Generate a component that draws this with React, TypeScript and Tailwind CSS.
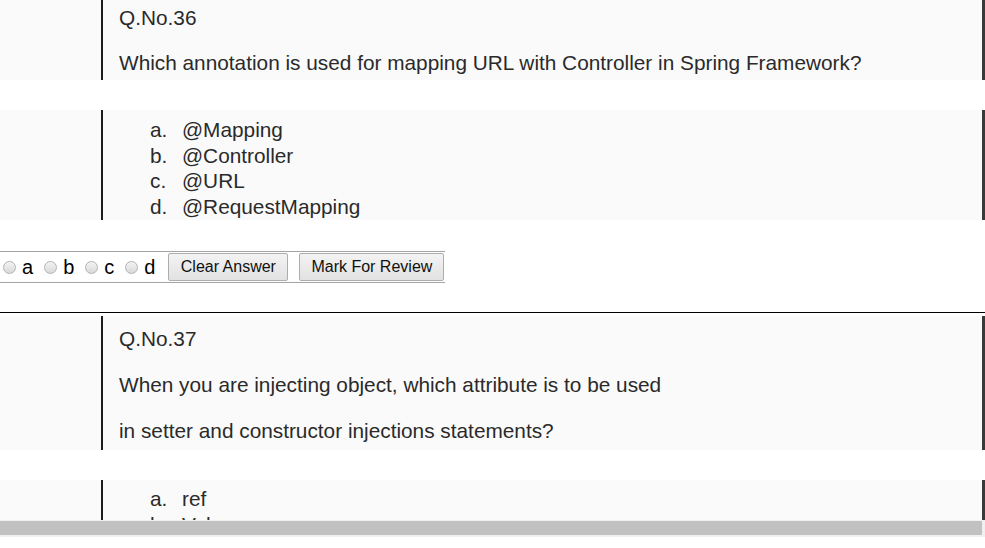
import React from 'react';

type Block = {
  kind: 'question' | 'options';
  lines: string[];
};

const font = { fontFamily: '"Liberation Sans", Arial, sans-serif' };

const QuestionBlock = ({ lines, className }: { lines: string[]; className: string }) => (
  <div className={`bg-[#fafafa] flex ${className}`}>
    <div className="ml-[101px] flex-1 border-l-2 border-l-[#1c1c1c] border-r-[3px] border-r-[#3a3a3a] pl-[16px] text-[20.8px] text-[#2a2a2a] flex flex-col">
      {lines.map((line, i) => (
        <div key={i} className="leading-[24px] whitespace-nowrap">
          {line}
        </div>
      ))}
    </div>
  </div>
);

const OptionsBlock = ({ options, className }: { options: string[]; className: string }) => (
  <div className={`bg-[#fafafa] flex ${className}`}>
    <div className="ml-[101px] flex-1 border-l-2 border-l-[#1c1c1c] border-r-[3px] border-r-[#3a3a3a] pl-[47px] text-[20.8px] text-[#2a2a2a]">
      {options.map((opt, i) => (
        <div key={i} className="flex leading-[25.67px] whitespace-nowrap">
          <span className="w-[32px]">{String.fromCharCode(97 + i)}.</span>
          <span>{opt}</span>
        </div>
      ))}
    </div>
  </div>
);

const Radio = ({ label }: { label: string }) => (
  <label className="flex items-center gap-[6px]">
    <span className="w-[13px] h-[13px] rounded-full border border-[#b3b3b3] bg-gradient-to-b from-[#f4f4f4] to-[#d9d9d9]" />
    <span className="text-[20px] leading-none text-black">{label}</span>
  </label>
);

const AnswerBar = () => (
  <div className="w-[445px] h-[32px] border-y border-[#a3a3a3] flex items-center pl-[3px]">
    <div className="flex items-center gap-[11px]">
      <Radio label="a" />
      <Radio label="b" />
      <Radio label="c" />
      <Radio label="d" />
    </div>
    <button className="ml-[13px] h-[28px] w-[120px] border border-[#adadad] rounded-[2px] bg-gradient-to-b from-[#f3f3f3] to-[#e2e2e2] text-[16px] text-[#111]">
      Clear Answer
    </button>
    <button className="ml-[11px] h-[28px] w-[145px] border border-[#adadad] rounded-[2px] bg-gradient-to-b from-[#f3f3f3] to-[#e2e2e2] text-[16px] text-[#111]">
      Mark For Review
    </button>
  </div>
);

export default function App() {
  return (
    <div className="w-[985px] h-[548px] bg-white overflow-hidden" style={font}>
      <div className="h-[520px] overflow-hidden flex flex-col">
        <QuestionBlock
          className="h-[80px] shrink-0 [&>div]:pt-[6px] [&>div]:gap-[21px]"
          lines={['Q.No.36', 'Which annotation is used for mapping URL with Controller in Spring Framework?']}
        />
        <OptionsBlock
          className="h-[110px] shrink-0 mt-[30px] [&>div]:pt-[7px]"
          options={['@Mapping', '@Controller', '@URL', '@RequestMapping']}
        />
        <div className="mt-[31px] shrink-0">
          <AnswerBar />
        </div>
        <div className="mt-[29px] h-px bg-black shrink-0" />
        <QuestionBlock
          className="h-[134px] shrink-0 mt-[3px] [&>div]:pt-[11px] [&>div]:gap-[22px]"
          lines={[
            'Q.No.37',
            'When you are injecting object, which attribute is to be used',
            'in setter and constructor injections statements?',
          ]}
        />
        <OptionsBlock
          className="h-[120px] shrink-0 mt-[30px] [&>div]:pt-[6px]"
          options={['ref', 'Value', 'name', 'property']}
        />
      </div>
      <div className="h-[17px] bg-[#f0f0f0] pt-px">
        <div className="w-[982px] h-[14px] bg-[#c1c1c1]" />
      </div>
    </div>
  );
}
